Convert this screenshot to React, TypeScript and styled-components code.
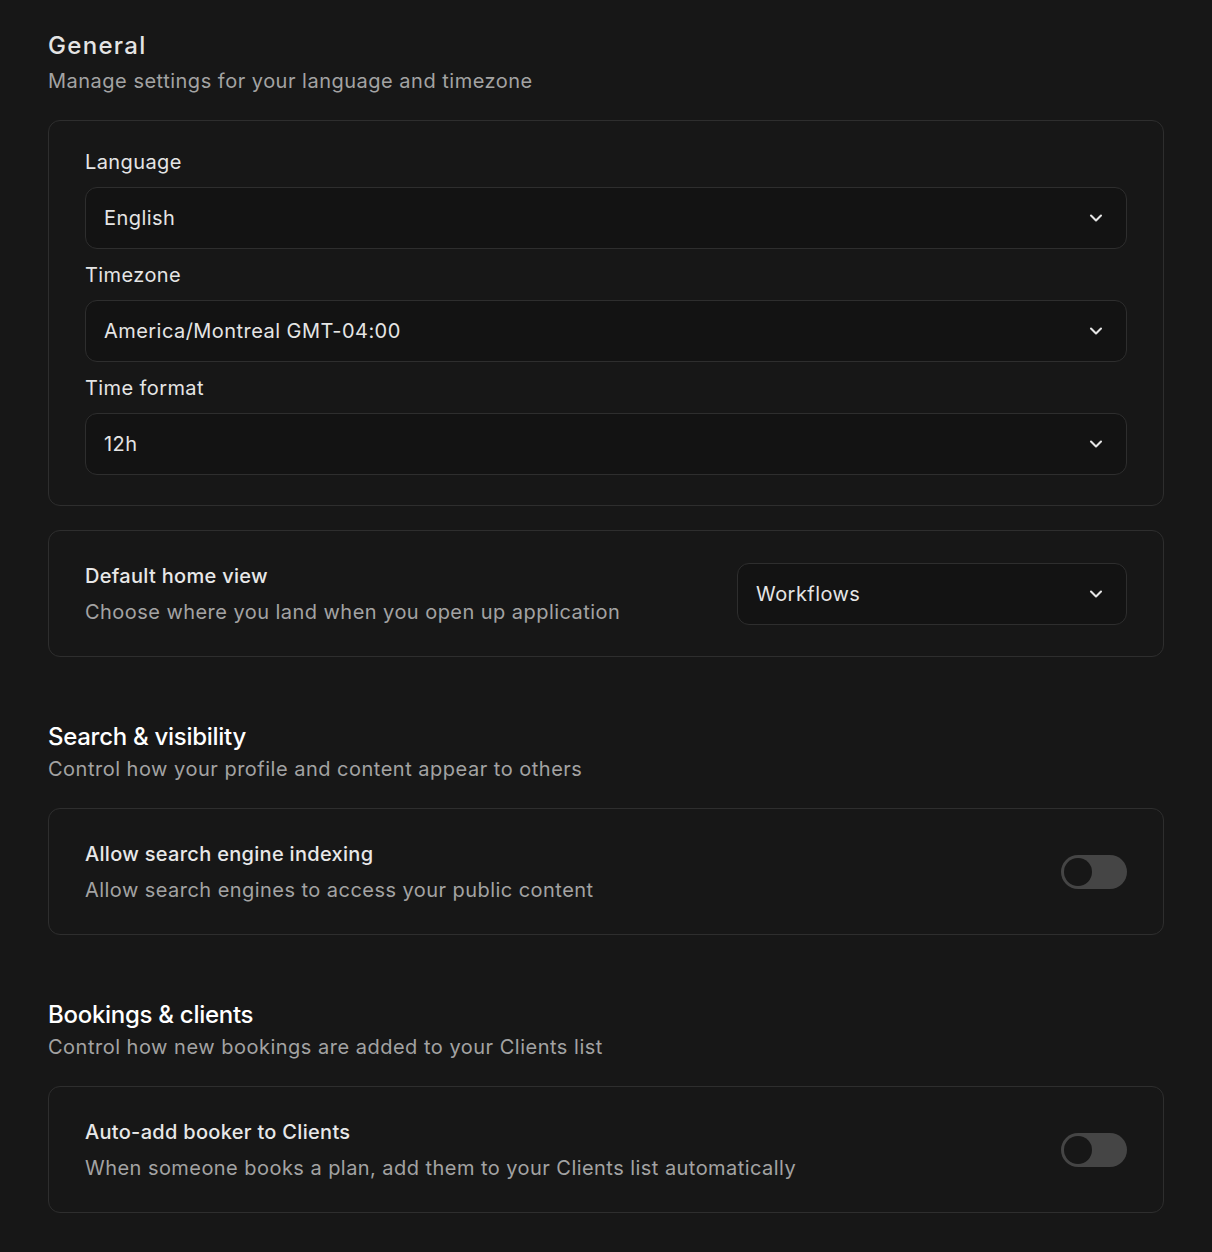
import React from 'react';
import styled, { createGlobalStyle } from 'styled-components';
import { ChevronDown } from 'lucide-react';

const GlobalStyle = createGlobalStyle`
  html, body {
    margin: 0;
    padding: 0;
    background: #171717;
  }
  body {
    font-family: Inter, "Noto Sans", sans-serif;
    color: #e5e5e5;
    -webkit-font-smoothing: antialiased;
  }
`;

const Page = styled.div`
  padding: 29px 48px 38px;
  display: flex;
  flex-direction: column;
`;

const Section = styled.section<{ $gap?: number }>`
  display: flex;
  flex-direction: column;
  gap: 25px;
  margin-top: ${(p) => p.$gap ?? 0}px;
`;

const SectionHead = styled.div<{ $gap?: number }>`
  display: flex;
  flex-direction: column;
  gap: ${(p) => p.$gap ?? 1}px;
`;

const Heading = styled.h2<{ $primary?: boolean }>`
  margin: 0;
  font-size: 24px;
  line-height: 34px;
  font-weight: 500;
  color: ${(p) => (p.$primary ? '#e4e4e4' : '#ffffff')};
  letter-spacing: ${(p) => (p.$primary ? '1.3px' : '-0.28px')};
`;

const Subtitle = styled.p`
  margin: 0;
  font-size: 20px;
  line-height: 28px;
  color: #a3a3a3;
  letter-spacing: 0.5px;
`;

const Card = styled.div`
  border: 1px solid #2e2e2e;
  border-radius: 12px;
  background: #171717;
  padding: 27px 36px 30px;
  display: flex;
  flex-direction: column;
  gap: 12px;
`;

const Field = styled.div`
  display: flex;
  flex-direction: column;
  gap: 11px;
`;

const Label = styled.label`
  font-size: 20px;
  line-height: 28px;
  color: #e5e5e5;
  letter-spacing: 0.4px;
`;

const Select = styled.div<{ $width?: number }>`
  display: flex;
  align-items: center;
  justify-content: space-between;
  height: 62px;
  box-sizing: border-box;
  width: ${(p) => (p.$width ? `${p.$width}px` : '100%')};
  flex-shrink: 0;
  padding: 0 20px 0 18px;
  border: 1px solid #2e2e2e;
  border-radius: 12px;
  background: #131313;
  font-size: 20px;
  color: #e5e5e5;
  letter-spacing: 0.45px;
  svg {
    color: #e5e5e5;
  }
`;

const RowCard = styled.div`
  border: 1px solid #2e2e2e;
  border-radius: 12px;
  padding: 0 36px;
  height: 127px;
  box-sizing: border-box;
  display: flex;
  align-items: center;
  justify-content: space-between;
  gap: 24px;
`;

const RowText = styled.div`
  display: flex;
  flex-direction: column;
  gap: 8px;
`;

const RowTitle = styled.div`
  font-size: 20px;
  line-height: 28px;
  font-weight: 500;
  color: #e8e8e8;
  letter-spacing: 0.3px;
`;

const RowDesc = styled.div`
  font-size: 20px;
  line-height: 28px;
  color: #a3a3a3;
  letter-spacing: 0.45px;
`;

const Track = styled.div<{ $on?: boolean }>`
  width: 66px;
  height: 34px;
  border-radius: 17px;
  background: ${(p) => (p.$on ? '#e5e5e5' : '#454545')};
  position: relative;
  flex-shrink: 0;
`;

const Knob = styled.div<{ $on?: boolean }>`
  position: absolute;
  top: 3px;
  left: ${(p) => (p.$on ? '35px' : '3px')};
  width: 28px;
  height: 28px;
  border-radius: 50%;
  background: #171717;
`;

function Dropdown({ value, width }: { value: string; width?: number }) {
  return (
    <Select $width={width}>
      <span>{value}</span>
      <ChevronDown size={20} strokeWidth={2.5} />
    </Select>
  );
}

function Toggle({ on }: { on?: boolean }) {
  return (
    <Track $on={on}>
      <Knob $on={on} />
    </Track>
  );
}

export default function App() {
  return (
    <>
      <GlobalStyle />
      <Page>
        <Section>
          <SectionHead $gap={4}>
            <Heading $primary>General</Heading>
            <Subtitle>Manage settings for your language and timezone</Subtitle>
          </SectionHead>
          <Card>
            <Field>
              <Label>Language</Label>
              <Dropdown value="English" />
            </Field>
            <Field>
              <Label>Timezone</Label>
              <Dropdown value="America/Montreal GMT-04:00" />
            </Field>
            <Field>
              <Label>Time format</Label>
              <Dropdown value="12h" />
            </Field>
          </Card>
        </Section>

        <Section $gap={24}>
          <RowCard>
            <RowText>
              <RowTitle>Default home view</RowTitle>
              <RowDesc>Choose where you land when you open up application</RowDesc>
            </RowText>
            <Dropdown value="Workflows" width={390} />
          </RowCard>
        </Section>

        <Section $gap={63}>
          <SectionHead>
            <Heading>Search &amp; visibility</Heading>
            <Subtitle>Control how your profile and content appear to others</Subtitle>
          </SectionHead>
          <RowCard>
            <RowText>
              <RowTitle>Allow search engine indexing</RowTitle>
              <RowDesc>Allow search engines to access your public content</RowDesc>
            </RowText>
            <Toggle />
          </RowCard>
        </Section>

        <Section $gap={63}>
          <SectionHead>
            <Heading>Bookings &amp; clients</Heading>
            <Subtitle>Control how new bookings are added to your Clients list</Subtitle>
          </SectionHead>
          <RowCard>
            <RowText>
              <RowTitle>Auto-add booker to Clients</RowTitle>
              <RowDesc>When someone books a plan, add them to your Clients list automatically</RowDesc>
            </RowText>
            <Toggle />
          </RowCard>
        </Section>
      </Page>
    </>
  );
}
